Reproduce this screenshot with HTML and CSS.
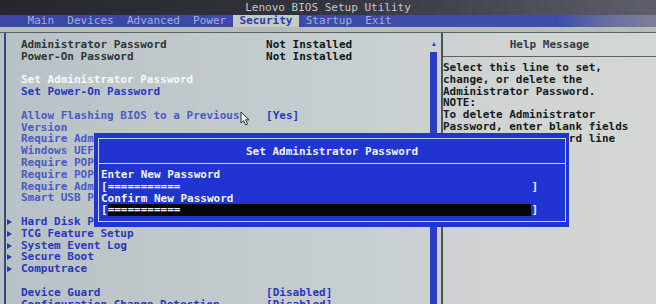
FILE: index.html
```html
<!DOCTYPE html>
<html lang="en">
<head>
    <meta charset="UTF-8">
    <meta name="viewport" content="width=device-width, initial-scale=1.0">
    <title>Lenovo BIOS Setup Utility</title>
    <link rel="stylesheet" href="styles.css">
</head>
<body>
<div class="screen">
    <div class="topbar">Lenovo BIOS Setup Utility</div>

    <nav class="menubar">
        <span class="tab">Main</span>
        <span class="tab">Devices</span>
        <span class="tab">Advanced</span>
        <span class="tab">Power</span>
        <span class="tab active">Security</span>
        <span class="tab">Startup</span>
        <span class="tab">Exit</span>
    </nav>

    <div class="strip"></div>

    <div class="main">
        <section class="panel">
            <div class="list">
                <div class="row"><span class="mark"></span><span class="dim">Administrator Password</span><span class="plain">Not Installed</span></div>
                <div class="row"><span class="mark"></span><span class="dim">Power-On Password</span><span class="plain">Not Installed</span></div>
                <div class="row"></div>
                <div class="row"><span class="mark"></span><span class="selected">Set Administrator Password</span></div>
                <div class="row"><span class="mark"></span><span class="link">Set Power-On Password</span></div>
                <div class="row"></div>
                <div class="row"><span class="mark"></span><span class="soft">Allow Flashing BIOS to a Previous</span><span class="link">[Yes]</span></div>
                <div class="row"><span class="mark"></span><span class="soft">Version</span></div>
                <div class="row"><span class="mark"></span><span class="soft">Require Admin. Pass. when Flashing</span><span class="link">[No]</span></div>
                <div class="row"><span class="mark"></span><span class="soft">Windows UEFI Firmware Update</span><span class="link">[Enabled]</span></div>
                <div class="row"><span class="mark"></span><span class="soft">Require POP on Restart</span><span class="link">[No]</span></div>
                <div class="row"><span class="mark"></span><span class="soft">Require POP on System Boot</span><span class="link">[No]</span></div>
                <div class="row"><span class="mark"></span><span class="soft">Require Admin. Pass. For F12</span><span class="link">[No]</span></div>
                <div class="row"><span class="mark"></span><span class="soft">Smart USB Protection</span><span class="link">[Disabled]</span></div>
                <div class="row"></div>
                <div class="row"><span class="mark sub"></span><span class="link">Hard Disk Password</span></div>
                <div class="row"><span class="mark sub"></span><span class="link">TCG Feature Setup</span></div>
                <div class="row"><span class="mark sub"></span><span class="link">System Event Log</span></div>
                <div class="row"><span class="mark sub"></span><span class="link">Secure Boot</span></div>
                <div class="row"><span class="mark sub"></span><span class="link">Computrace</span></div>
                <div class="row"></div>
                <div class="row"><span class="mark"></span><span class="link">Device Guard</span><span class="link">[Disabled]</span></div>
                <div class="row"><span class="mark"></span><span class="link">Configuration Change Detection</span><span class="link">[Disabled]</span></div>
            </div>
            <div class="scroll">
                <span class="arrow"></span>
                <span class="thumb"></span>
            </div>
        </section>

        <aside class="help">
            <div class="help-title">Help Message</div>
            <div class="help-text">
                <div>Select this line to set,</div>
                <div>change, or delete the</div>
                <div>Administrator Password.</div>
                <div>NOTE:</div>
                <div>To delete Administrator</div>
                <div>Password, enter blank fields</div>
                <div>in Enter New Password line</div>
            </div>
        </aside>
    </div>

    <!-- popup over the list -->
    <div class="dialog">
        <div class="frame">
            <div class="dialog-title">Set Administrator Password</div>
            <div class="dialog-body">
                <div class="line">Enter New Password</div>
                <div class="line">[<span class="field">===========</span>]</div>
                <div class="line">Confirm New Password</div>
                <div class="line">[<span class="field focus">===========</span>]</div>
            </div>
        </div>
    </div>

    <svg class="cursor" width="12" height="15" viewBox="0 0 12 15">
        <path d="M1 1 L1 12 L3.6 9.6 L5.6 13.8 L7.6 12.9 L5.6 8.8 L9 8.8 Z" fill="#f4f6f6" stroke="#2a3036" stroke-width="1"/>
    </svg>
</div>
</body>
</html>
```

FILE: styles.css
```css
html, body {
    margin: 0;
    padding: 0;
}

body {
    width: 656px;
    height: 304px;
    overflow: hidden;
    font-family: "DejaVu Sans Mono", "Liberation Mono", monospace;
    font-size: 11px;
    font-weight: bold;
    background: #aab2b6;
}

.screen {
    position: relative;
    height: 304px;
    overflow: hidden;
}

.topbar {
    height: 15px;
    line-height: 16px;
    text-align: center;
    color: #c6c6cc;
    font-weight: normal;
    background: linear-gradient(to right, #26262c, #34343c 50%, #5e5e6c);
}

.menubar {
    display: flex;
    height: 12px;
    line-height: 12px;
    padding-left: 21px;
    background: linear-gradient(to right, #3a47a8, #3e4cae 85%, #6a70a0 93%, #7c7e98);
}

.tab {
    padding: 0 1ch;
    color: #a4aedc;
    font-weight: normal;
}

.tab.active {
    background-color: #c4cac4;
    color: #2a3ab6;
    font-weight: bold;
}

.strip {
    height: 5px;
    background-color: #b6bcb6;
    border-bottom: 1px solid #59616a;
}

.main {
    display: grid;
    grid-template-columns: 441px 1fr;
    height: 271px;
    background: linear-gradient(to right, #b8c1c5, #c4cccf 45%, #cfd4d2 75%, #d4d8d4);
}

.panel {
    display: flex;
    margin-left: 4px;
    border-left: 2px solid #3a4678;
}

.list {
    flex: 1;
    padding-top: 6px;
}

.row {
    display: grid;
    grid-template-columns: 15px 37ch auto;
    height: 11.8px;
    line-height: 11.8px;
    white-space: nowrap;
}

.mark.sub {
    width: 0;
    height: 0;
    margin: 3px 0 0 1px;
    border-left: 5px solid #2838c4;
    border-top: 3px solid transparent;
    border-bottom: 3px solid transparent;
}

.dim {
    color: #2e3636;
}

.plain {
    color: #101818;
}

.selected {
    color: #f6f8f8;
}

.link {
    color: #2838c0;
}

.soft {
    color: #4a5bc6;
}

.scroll {
    display: flex;
    flex-direction: column;
    align-items: center;
    width: 7px;
    margin-right: 4px;
    padding-top: 9px;
}

.arrow {
    width: 0;
    height: 0;
    border-bottom: 4px solid #3848c4;
    border-left: 2.5px solid transparent;
    border-right: 2.5px solid transparent;
}

.thumb {
    flex: 1;
    width: 7px;
    margin: 6px 0 6px 0;
    background-color: #2c3ec6;
}

.help {
    border-left: 2px solid #4c5460;
    color: #161c1e;
}

.help-title {
    height: 23px;
    line-height: 24px;
    text-align: center;
    color: #343c48;
    border-bottom: 1px solid #59616a;
}

.help-text {
    padding-top: 5px;
    line-height: 11.8px;
    white-space: nowrap;
}

.dialog {
    position: absolute;
    left: 94px;
    top: 133px;
    width: 475px;
    height: 94px;
    padding: 5px 3px 5px 4px;
    box-sizing: border-box;
    background-color: #1f34d0;
}

.frame {
    height: 100%;
    box-sizing: border-box;
    border: 1px solid #c8d2f2;
}

.dialog-title {
    height: 24px;
    line-height: 25px;
    text-align: center;
    color: #eef2fc;
    border-bottom: 1px solid #c8d2f2;
}

.dialog-body {
    padding: 5px 2px 0 2px;
}

.line {
    display: flex;
    height: 11.8px;
    line-height: 11.8px;
    color: #f2f4fc;
    white-space: nowrap;
}

.field {
    width: 64ch;
}

.field.focus {
    background-color: #050608;
}

.cursor {
    position: absolute;
    left: 240px;
    top: 111px;
}
```
